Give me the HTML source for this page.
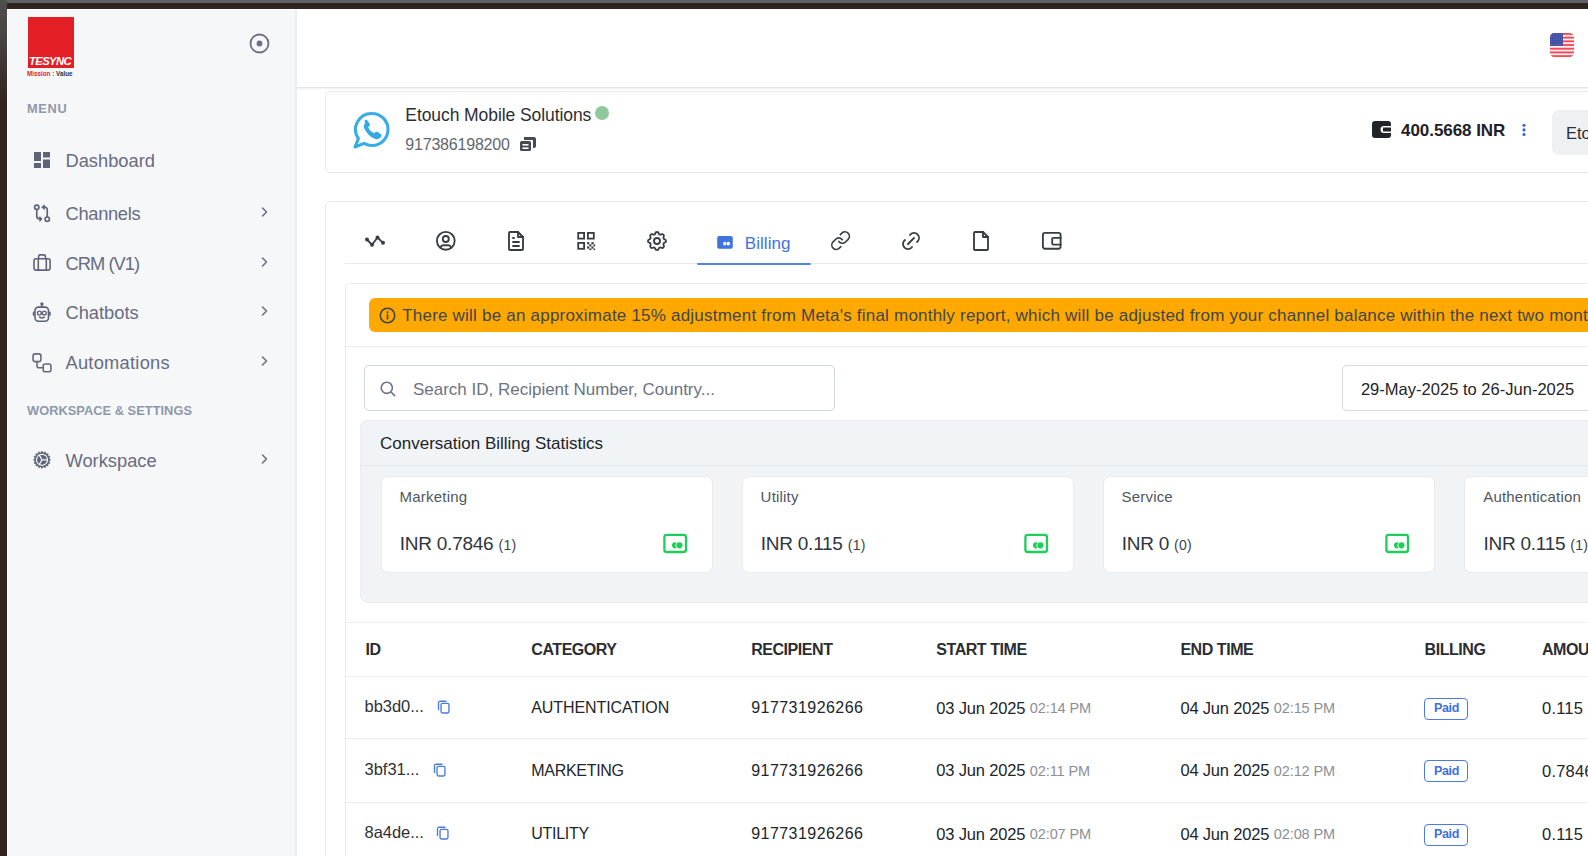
<!DOCTYPE html>
<html><head><meta charset="utf-8">
<style>
*{margin:0;padding:0;box-sizing:border-box}
html,body{width:1588px;height:856px;overflow:hidden;background:#fff;font-family:"Liberation Sans",sans-serif}
.t{position:absolute;white-space:nowrap}
.r{position:absolute}
</style></head><body>
<div class="r" style="left:0px;top:0px;width:1588px;height:856px;background:#fff"></div>
<div class="r" style="left:7px;top:9px;width:290px;height:847px;background:#fff"></div>
<div class="r" style="left:8px;top:10px;width:287px;height:846px;background:#f6f7f9"></div>
<div class="r" style="left:295px;top:9px;width:2px;height:847px;background:#eceef1"></div>
<div class="r" style="left:297px;top:9px;width:1291px;height:78px;background:#fff"></div>
<div class="r" style="left:297px;top:86.5px;width:1291px;height:1.2px;background:#e4e6ea"></div>
<div class="r" style="left:297px;top:87.7px;width:1291px;height:2px;background:linear-gradient(#eef0f2,#fff)"></div>
<div class="r" style="left:28px;top:17px;width:46px;height:51px;background:#e31e24"></div>
<div class="t" style="left:29.4px;top:57.33px;font-size:10px;line-height:10px;color:#fff;font-weight:bold;letter-spacing:-0.55px;font-style:italic;transform:scaleX(1.13);transform-origin:left">TESYNC</div>
<div class="t" style="left:27px;top:70.77px;font-size:6.3px;line-height:6.3px;color:#333;font-weight:bold;letter-spacing:0px;transform:scaleX(1.0);transform-origin:left"><span style="color:#e31e24">Mission :</span> Value</div>
<svg class="r" style="left:249px;top:33px;" width="21" height="21" viewBox="0 0 21 21"><circle cx="10.5" cy="10.5" r="9" fill="none" stroke="#6b6f85" stroke-width="1.8"/><circle cx="10.5" cy="10.5" r="2.9" fill="#6b6f85"/></svg>
<div class="t" style="left:27px;top:102.66px;font-size:12.8px;line-height:12.8px;color:#8f98aa;font-weight:bold;letter-spacing:0.7px;">MENU</div>
<div class="t" style="left:27px;top:404.86px;font-size:12.8px;line-height:12.8px;color:#8f98aa;font-weight:bold;letter-spacing:0.05px;">WORKSPACE &amp; SETTINGS</div>
<div class="t" style="left:65.5px;top:151.91px;font-size:18.3px;line-height:18.3px;color:#676c80;font-weight:normal;letter-spacing:0px;">Dashboard</div>
<div class="t" style="left:65.5px;top:204.91px;font-size:18.3px;line-height:18.3px;color:#676c80;font-weight:normal;letter-spacing:-0.3px;">Channels</div>
<svg class="r" style="left:259px;top:204.8px;" width="12" height="14" viewBox="0 0 12 14"><path d="M3.5 3l4 4-4 4" fill="none" stroke="#6b7080" stroke-width="1.6" stroke-linecap="round" stroke-linejoin="round"/></svg>
<div class="t" style="left:65.5px;top:254.61px;font-size:18.3px;line-height:18.3px;color:#676c80;font-weight:normal;letter-spacing:-0.95px;">CRM (V1)</div>
<svg class="r" style="left:259px;top:254.5px;" width="12" height="14" viewBox="0 0 12 14"><path d="M3.5 3l4 4-4 4" fill="none" stroke="#6b7080" stroke-width="1.6" stroke-linecap="round" stroke-linejoin="round"/></svg>
<div class="t" style="left:65.5px;top:304.31px;font-size:18.3px;line-height:18.3px;color:#676c80;font-weight:normal;letter-spacing:0px;">Chatbots</div>
<svg class="r" style="left:259px;top:304.2px;" width="12" height="14" viewBox="0 0 12 14"><path d="M3.5 3l4 4-4 4" fill="none" stroke="#6b7080" stroke-width="1.6" stroke-linecap="round" stroke-linejoin="round"/></svg>
<div class="t" style="left:65.5px;top:354.21px;font-size:18.3px;line-height:18.3px;color:#676c80;font-weight:normal;letter-spacing:0.25px;">Automations</div>
<svg class="r" style="left:259px;top:354.1px;" width="12" height="14" viewBox="0 0 12 14"><path d="M3.5 3l4 4-4 4" fill="none" stroke="#6b7080" stroke-width="1.6" stroke-linecap="round" stroke-linejoin="round"/></svg>
<div class="t" style="left:65.5px;top:451.91px;font-size:18.3px;line-height:18.3px;color:#676c80;font-weight:normal;letter-spacing:0px;">Workspace</div>
<svg class="r" style="left:259px;top:451.8px;" width="12" height="14" viewBox="0 0 12 14"><path d="M3.5 3l4 4-4 4" fill="none" stroke="#6b7080" stroke-width="1.6" stroke-linecap="round" stroke-linejoin="round"/></svg>
<svg class="r" style="left:34px;top:152px;" width="16" height="16" viewBox="0 0 16 16"><g fill="#5f6377"><rect x="0" y="0" width="7" height="9"/><rect x="9" y="0" width="7" height="5.5"/><rect x="0" y="11" width="7" height="5"/><rect x="9" y="7.5" width="7" height="8.5"/></g></svg>
<svg class="r" style="left:25px;top:195px;" width="35" height="35" viewBox="0 0 35 35"><g fill="none" stroke="#5f6377" stroke-width="1.7" stroke-linecap="round" stroke-linejoin="round"><circle cx="11.75" cy="12.35" r="2.15"/><circle cx="22.25" cy="24.15" r="2.15"/><path d="M11.75 14.5V21.2a2.5 2.5 0 0 0 2.5 2.5H15.5"/><path d="M22.25 22V14.7a2.5 2.5 0 0 0-2.5-2.5H18.5"/></g><g fill="#5f6377" stroke="#5f6377" stroke-width="0.8" stroke-linejoin="round"><path d="M14.7 21.6L17.2 24L14.7 26.4z"/><path d="M19.3 9.9L16.7 12.2L19.3 14.5z"/></g></svg>
<svg class="r" style="left:28px;top:248px;" width="28" height="28" viewBox="0 0 28 28"><g fill="none" stroke="#5f6377" stroke-width="1.6" stroke-linecap="round" stroke-linejoin="round"><rect x="6" y="10.8" width="16.1" height="11.3" rx="2"/><path d="M10.6 10.8V8.4a1.5 1.5 0 0 1 1.5-1.5h3.8a1.5 1.5 0 0 1 1.5 1.5V10.8"/><path d="M10.3 10.8v11.3M18.3 10.8v11.3"/></g></svg>
<svg class="r" style="left:28px;top:298px;" width="28" height="28" viewBox="0 0 28 28"><g fill="none" stroke="#5f6377" stroke-width="1.6" stroke-linecap="round" stroke-linejoin="round"><rect x="7" y="9.1" width="13.5" height="14.1" rx="3.5"/><path d="M13.9 6.5v2.6"/><path d="M5.6 14.3v3M21.9 14.3v3"/><circle cx="11.4" cy="15" r="1.9" stroke-width="1.4"/><circle cx="16.3" cy="15" r="1.9" stroke-width="1.4"/><path d="M11.6 19.1q2.3 1.8 4.6 0"/></g><circle cx="13.9" cy="5.9" r="1.7" fill="#5f6377"/></svg>
<svg class="r" style="left:28px;top:348px;" width="28" height="28" viewBox="0 0 28 28"><g fill="none" stroke="#666a7c" stroke-width="1.6" stroke-linecap="round" stroke-linejoin="round"><rect x="5.1" y="5.9" width="7.8" height="7.7" rx="2"/><rect x="15.2" y="16" width="7.7" height="7.7" rx="2"/><path d="M9 13.6V17.8a2 2 0 0 0 2 2H15.2"/></g></svg>
<svg class="r" style="left:28px;top:445px;" width="28" height="28" viewBox="0 0 28 28"><polygon points="14.00,6.10 15.37,7.93 17.33,6.76 17.89,8.98 20.15,8.65 19.82,10.91 22.04,11.47 20.87,13.43 22.70,14.80 20.87,16.17 22.04,18.13 19.82,18.69 20.15,20.95 17.89,20.62 17.33,22.84 15.37,21.67 14.00,23.50 12.63,21.67 10.67,22.84 10.11,20.62 7.85,20.95 8.18,18.69 5.96,18.13 7.13,16.17 5.30,14.80 7.13,13.43 5.96,11.47 8.18,10.91 7.85,8.65 10.11,8.98 10.67,6.76 12.63,7.93" fill="#5f6377" stroke="#5f6377" stroke-width="0.6" stroke-linejoin="round"/><circle cx="14" cy="14.8" r="6.1" fill="#f6f7f9"/><circle cx="14" cy="14.8" r="4.9" fill="#5f6377"/><path d="M14 14.8L20.00 14.80M14 14.8L11.00 20.00M14 14.8L11.00 9.60" stroke="#f6f7f9" stroke-width="1.3"/></svg>
<svg class="r" style="left:1550px;top:33px;" width="24" height="24" viewBox="0 0 24 24"><defs><clipPath id="fc"><rect x="0" y="0" width="24" height="24" rx="4.5"/></clipPath></defs><g clip-path="url(#fc)"><rect width="24" height="24" fill="#f4f4f4"/><rect x="0" y="0.00" width="24" height="1.9" fill="#fd4757"/><rect x="0" y="3.69" width="24" height="1.9" fill="#fd4757"/><rect x="0" y="7.38" width="24" height="1.9" fill="#fd4757"/><rect x="0" y="11.07" width="24" height="1.9" fill="#fd4757"/><rect x="0" y="14.76" width="24" height="1.9" fill="#fd4757"/><rect x="0" y="18.45" width="24" height="1.9" fill="#fd4757"/><rect x="0" y="22.14" width="24" height="1.9" fill="#fd4757"/><rect x="0" y="0" width="13" height="12.9" fill="#4450a3"/><circle cx="1.50" cy="1.50" r="0.45" fill="#8d96cf"/><circle cx="4.00" cy="1.50" r="0.45" fill="#8d96cf"/><circle cx="6.50" cy="1.50" r="0.45" fill="#8d96cf"/><circle cx="9.00" cy="1.50" r="0.45" fill="#8d96cf"/><circle cx="11.50" cy="1.50" r="0.45" fill="#8d96cf"/><circle cx="1.50" cy="3.95" r="0.45" fill="#8d96cf"/><circle cx="4.00" cy="3.95" r="0.45" fill="#8d96cf"/><circle cx="6.50" cy="3.95" r="0.45" fill="#8d96cf"/><circle cx="9.00" cy="3.95" r="0.45" fill="#8d96cf"/><circle cx="11.50" cy="3.95" r="0.45" fill="#8d96cf"/><circle cx="1.50" cy="6.40" r="0.45" fill="#8d96cf"/><circle cx="4.00" cy="6.40" r="0.45" fill="#8d96cf"/><circle cx="6.50" cy="6.40" r="0.45" fill="#8d96cf"/><circle cx="9.00" cy="6.40" r="0.45" fill="#8d96cf"/><circle cx="11.50" cy="6.40" r="0.45" fill="#8d96cf"/><circle cx="1.50" cy="8.85" r="0.45" fill="#8d96cf"/><circle cx="4.00" cy="8.85" r="0.45" fill="#8d96cf"/><circle cx="6.50" cy="8.85" r="0.45" fill="#8d96cf"/><circle cx="9.00" cy="8.85" r="0.45" fill="#8d96cf"/><circle cx="11.50" cy="8.85" r="0.45" fill="#8d96cf"/><circle cx="1.50" cy="11.30" r="0.45" fill="#8d96cf"/><circle cx="4.00" cy="11.30" r="0.45" fill="#8d96cf"/><circle cx="6.50" cy="11.30" r="0.45" fill="#8d96cf"/><circle cx="9.00" cy="11.30" r="0.45" fill="#8d96cf"/><circle cx="11.50" cy="11.30" r="0.45" fill="#8d96cf"/></g></svg>
<div class="r" style="left:325px;top:91.3px;width:1300px;height:81.4px;border:1px solid #e7e9ec;border-radius:5px;background:#fff"></div>
<svg class="r" style="left:352px;top:110px;" width="40" height="40" viewBox="0 0 40 40"><path d="M20 3.5a16 16 0 0 1 0 32c-2.9 0-5.6-.8-8-2.1L3 37l3.4-8.4A16 16 0 0 1 20 3.5z" fill="none" stroke="#38ace6" stroke-width="3.1" stroke-linejoin="round"/><path transform="translate(20.6 19.4) scale(1.32) translate(-20.25 -19.4)" d="M14.2 12.6c.6-.6 1.6-.6 2.1.1l1.6 2.3c.4.6.3 1.4-.2 1.9l-.8.8c.9 2 2.6 3.8 4.6 4.7l.8-.8c.5-.5 1.3-.6 1.9-.2l2.3 1.6c.7.5.8 1.5.1 2.1l-.9.9c-.9.9-2.3 1.2-3.5.7-3.8-1.6-6.8-4.6-8.4-8.4-.5-1.2-.2-2.6.7-3.5z" fill="#35a9e6"/></svg>
<div class="t" style="left:405.3px;top:106.59px;font-size:17.5px;line-height:17.5px;color:#2b2f33;font-weight:normal;letter-spacing:-0.08px;">Etouch Mobile Solutions</div>
<div class="r" style="left:595px;top:106px;width:14px;height:14px;border-radius:50%;background:#8fc89b"></div>
<div class="t" style="left:405.3px;top:136.86px;font-size:16px;line-height:16px;color:#62676d;font-weight:normal;letter-spacing:-0.2px;">917386198200</div>
<svg class="r" style="left:520px;top:137px;" width="16" height="14" viewBox="0 0 16 14"><g fill="#474b50"><path d="M4 0h10a2 2 0 0 1 2 2v7a2 2 0 0 1-2 2h-1V3H4z"/><rect x="0" y="4" width="11" height="10" rx="1.5"/></g><g fill="#fff"><rect x="2.5" y="7" width="6" height="1.6"/><rect x="2.5" y="10.4" width="6" height="1.6"/></g></svg>
<svg class="r" style="left:1372px;top:121px;" width="19" height="17" viewBox="0 0 19 17"><path d="M3 0h13a3 3 0 0 1 3 3v2h-7a3.5 3.5 0 0 0 0 7h7v2a3 3 0 0 1-3 3H3a3 3 0 0 1-3-3V3a3 3 0 0 1 3-3z" fill="#212529"/><rect x="11" y="6.5" width="8" height="4" fill="#212529"/></svg>
<div class="t" style="left:1401px;top:122.11px;font-size:17px;line-height:17px;color:#1e2226;font-weight:bold;letter-spacing:-0.05px;">400.5668 INR</div>
<svg class="r" style="left:1521px;top:122px;" width="6" height="15" viewBox="0 0 6 15"><g fill="#3a5ee8"><circle cx="3" cy="3.3" r="1.55"/><circle cx="3" cy="7.9" r="1.55"/><circle cx="3" cy="12.5" r="1.55"/></g></svg>
<div class="r" style="left:1552px;top:110px;width:60px;height:45px;background:#eef0f3;border-radius:7px"></div>
<div class="t" style="left:1566px;top:124.63px;font-size:16.5px;line-height:16.5px;color:#2b2f33;font-weight:normal;letter-spacing:0px;">Etouch</div>
<div class="r" style="left:325px;top:200.6px;width:1300px;height:700px;border:1px solid #e7e9ec;border-radius:5px;background:#fff"></div>
<div class="r" style="left:345px;top:263px;width:1300px;height:1px;background:#e9ebee"></div>
<div class="r" style="left:697px;top:262.7px;width:114px;height:2px;background:#5485e6;border-radius:1px"></div>
<svg class="r" style="left:363px;top:231px;" width="24" height="20" viewBox="0 0 24 20"><g fill="none" stroke="#393d43" stroke-width="1.85" stroke-linecap="round" stroke-linejoin="round"><path d="M4 8.5l5 5.3 5.5-7.3 5.5 5.3"/></g><g fill="#393d43"><circle cx="4" cy="8.5" r="2"/><circle cx="9" cy="13.8" r="2"/><circle cx="14.5" cy="6.5" r="2"/><circle cx="20" cy="11.8" r="2"/></g></svg>
<svg class="r" style="left:434px;top:229px;" width="24" height="24" viewBox="0 0 24 24"><g fill="none" stroke="#393d43" stroke-width="1.85" stroke-linecap="round" stroke-linejoin="round" stroke-width="1.9"><circle cx="11.8" cy="11.8" r="8.9"/><circle cx="11.8" cy="10" r="3"/><path d="M6.4 18.8a4 4 0 0 1 3.6-2.6h3.6a4 4 0 0 1 3.6 2.6"/></g></svg>
<svg class="r" style="left:506px;top:229px;" width="20" height="24" viewBox="0 0 20 24"><g fill="none" stroke="#393d43" stroke-width="1.85" stroke-linecap="round" stroke-linejoin="round"><path d="M4 3h8l5 5v12a1 1 0 0 1-1 1H4a1 1 0 0 1-1-1V4a1 1 0 0 1 1-1z"/><path d="M12 3v5h5"/><path d="M7 9h1M7 13h6M7 17h6"/></g></svg>
<svg class="r" style="left:575px;top:230px;" width="23" height="23" viewBox="0 0 23 23"><g fill="none" stroke="#393d43" stroke-width="1.8"><rect x="3.2" y="2.9" width="5.9" height="5.7"/><rect x="12.9" y="2.9" width="5.9" height="5.7"/><rect x="3.2" y="12.9" width="5.9" height="5.9"/></g><g fill="#393d43"><rect x="12.1" y="12.1" width="2.2" height="2.2"/><rect x="16.4" y="12.1" width="2.2" height="2.2"/><rect x="14.3" y="14.3" width="2.1" height="2.1"/><rect x="18.5" y="14.3" width="1.6" height="2.1"/><rect x="12.1" y="16.4" width="2.2" height="2.2"/><rect x="16.4" y="16.4" width="2.1" height="2.2"/><rect x="14.3" y="18.5" width="2.1" height="1.6"/><rect x="18.5" y="18.5" width="1.6" height="1.6"/></g></svg>
<svg class="r" style="left:645px;top:229px;" width="24" height="24" viewBox="0 0 24 24"><g fill="none" stroke="#393d43" stroke-width="1.85" stroke-linecap="round" stroke-linejoin="round"><path d="M10.3 4.3c.4-1.8 3-1.8 3.4 0a1.7 1.7 0 0 0 2.6 1.1c1.5-.9 3.3.8 2.4 2.4a1.7 1.7 0 0 0 1 2.5c1.8.4 1.8 3 0 3.4a1.7 1.7 0 0 0-1 2.6c.9 1.5-.8 3.3-2.4 2.4a1.7 1.7 0 0 0-2.6 1c-.4 1.8-3 1.8-3.4 0a1.7 1.7 0 0 0-2.5-1c-1.6.9-3.3-.8-2.4-2.4a1.7 1.7 0 0 0-1.1-2.6c-1.8-.4-1.8-3 0-3.4a1.7 1.7 0 0 0 1.1-2.5c-.9-1.6.8-3.3 2.4-2.4 1 .6 2.3.1 2.5-1.1z"/><circle cx="12" cy="12" r="3"/></g></svg>
<svg class="r" style="left:717px;top:236px;" width="16" height="13" viewBox="0 0 16 13"><rect x="0.2" y="0" width="15.6" height="12.7" rx="2" fill="#3e73e0"/><circle cx="8" cy="7.6" r="1.9" fill="#fff"/><circle cx="11.2" cy="7.6" r="2.5" fill="#3e73e0"/><circle cx="11.2" cy="7.6" r="1.9" fill="#fff"/></svg>
<div class="t" style="left:744.8px;top:234.91px;font-size:17px;line-height:17px;color:#3e73e0;font-weight:normal;letter-spacing:0.05px;">Billing</div>
<svg class="r" style="left:829.9px;top:230.4px;" width="21.2" height="21.2" viewBox="0 0 24 24"><g fill="none" stroke="#393d43" stroke-width="1.85" stroke-linecap="round" stroke-linejoin="round" stroke-width="2.1"><path d="M10 13a5 5 0 0 0 7.54.54l3-3a5 5 0 0 0-7.07-7.07l-1.72 1.71"/><path d="M14 11a5 5 0 0 0-7.54-.54l-3 3a5 5 0 0 0 7.07 7.07l1.71-1.71"/></g></svg>
<svg class="r" style="left:899px;top:228.9px;" width="24" height="24" viewBox="0 0 24 24"><g fill="none" stroke="#393d43" stroke-width="1.85" stroke-linecap="round" stroke-linejoin="round" stroke-width="1.9"><path d="M9 15l6-6"/><path d="M11 6l.463-.536a5 5 0 0 1 7.071 7.072l-.534.464"/><path d="M13 18l-.397.534a5.068 5.068 0 0 1-7.127 0a4.972 4.972 0 0 1 0-7.071l.524-.463"/></g></svg>
<svg class="r" style="left:970px;top:229px;" width="22" height="24" viewBox="0 0 22 24"><g fill="none" stroke="#393d43" stroke-width="1.85" stroke-linecap="round" stroke-linejoin="round"><path d="M5 3h8l5 5v12a1 1 0 0 1-1 1H5a1 1 0 0 1-1-1V4a1 1 0 0 1 1-1z"/><path d="M13 3v5h5"/></g></svg>
<svg class="r" style="left:1036px;top:226px;" width="30" height="30" viewBox="0 0 30 30"><g fill="none" stroke="#393d43" stroke-width="1.85" stroke-linecap="round" stroke-linejoin="round" stroke-width="1.7"><rect x="6.9" y="6.9" width="17.7" height="15.8" rx="2.2"/><path d="M24.6 11.8H17.2a1 1 0 0 0-1 1V17.6a1 1 0 0 0 1 1H24.6"/></g></svg>
<div class="r" style="left:345px;top:283px;width:1300px;height:700px;border:1px solid #e9ebee;border-radius:5px;background:#fff"></div>
<div class="r" style="left:369px;top:298px;width:1300px;height:34px;background:#ffa800;border-radius:6px"></div>
<svg class="r" style="left:379px;top:307px;" width="17" height="17" viewBox="0 0 17 17"><circle cx="8.5" cy="8.5" r="7.2" fill="none" stroke="#3f4650" stroke-width="1.6"/><circle cx="8.5" cy="5.2" r="1" fill="#3f4650"/><rect x="7.7" y="7.2" width="1.6" height="5.3" fill="#3f4650"/></svg>
<div class="t" style="left:402.2px;top:307.21px;font-size:17px;line-height:17px;color:#3f4650;font-weight:normal;letter-spacing:0.215px;">There will be an approximate 15% adjustment from Meta's final monthly report, which will be adjusted from your channel balance within the next two months.</div>
<div class="r" style="left:346px;top:346px;width:1300px;height:1px;background:#eceef1"></div>
<div class="r" style="left:364px;top:365px;width:471px;height:46px;border:1px solid #d2d7df;border-radius:5px;background:#fff"></div>
<svg class="r" style="left:379px;top:380px;" width="18" height="18" viewBox="0 0 18 18"><circle cx="7.8" cy="7.8" r="5.6" fill="none" stroke="#6c7384" stroke-width="1.6"/><path d="M12 12l3.6 3.6" stroke="#6c7384" stroke-width="1.6" stroke-linecap="round"/></svg>
<div class="t" style="left:412.9px;top:380.51px;font-size:17px;line-height:17px;color:#6c7282;font-weight:normal;letter-spacing:0px;">Search ID, Recipient Number, Country...</div>
<div class="r" style="left:1342px;top:365px;width:400px;height:46px;border:1px solid #d8dce2;border-radius:5px;background:#fff"></div>
<div class="t" style="left:1360.9px;top:380.93px;font-size:16.5px;line-height:16.5px;color:#212529;font-weight:normal;letter-spacing:0.02px;">29-May-2025 to 26-Jun-2025</div>
<div class="r" style="left:359.5px;top:420px;width:1300px;height:183px;background:#f1f4f7;border:1px solid #e9edf1;border-radius:7px"></div>
<div class="r" style="left:360px;top:465px;width:1300px;height:1px;background:#e3e7ec"></div>
<div class="t" style="left:380px;top:435.41px;font-size:17px;line-height:17px;color:#212529;font-weight:normal;letter-spacing:0px;">Conversation Billing Statistics</div>
<div class="r" style="left:380.6px;top:475.5px;width:332px;height:97.5px;background:#fff;border:1px solid #e8ebee;border-radius:7px"></div>
<div class="t" style="left:399.6px;top:489.10px;font-size:15px;line-height:15px;color:#4f565e;font-weight:normal;letter-spacing:0.2px;">Marketing</div>
<div class="t" style="left:399.8px;top:534.22px;font-size:19px;line-height:19px;color:#30363d;letter-spacing:-0.25px">INR 0.7846 <span style="font-size:14px;color:#3d434a;letter-spacing:0.3px">(1)</span></div>
<svg class="r" style="left:662.8px;top:532.5px;" width="25" height="21" viewBox="0 0 25 21"><rect x="1.4" y="1.9" width="21.6" height="17.1" rx="2.3" fill="none" stroke="#1fcd5b" stroke-width="2.3"/><circle cx="12.1" cy="12.35" r="3.1" fill="#1fcd5b"/><circle cx="16.45" cy="12.35" r="3.9" fill="#fff"/><circle cx="16.45" cy="12.35" r="3.1" fill="#1fcd5b"/></svg>
<div class="r" style="left:741.6px;top:475.5px;width:332px;height:97.5px;background:#fff;border:1px solid #e8ebee;border-radius:7px"></div>
<div class="t" style="left:760.6px;top:489.10px;font-size:15px;line-height:15px;color:#4f565e;font-weight:normal;letter-spacing:0.2px;">Utility</div>
<div class="t" style="left:760.8000000000001px;top:534.22px;font-size:19px;line-height:19px;color:#30363d;letter-spacing:-0.25px">INR 0.115 <span style="font-size:14px;color:#3d434a;letter-spacing:0.3px">(1)</span></div>
<svg class="r" style="left:1023.8px;top:532.5px;" width="25" height="21" viewBox="0 0 25 21"><rect x="1.4" y="1.9" width="21.6" height="17.1" rx="2.3" fill="none" stroke="#1fcd5b" stroke-width="2.3"/><circle cx="12.1" cy="12.35" r="3.1" fill="#1fcd5b"/><circle cx="16.45" cy="12.35" r="3.9" fill="#fff"/><circle cx="16.45" cy="12.35" r="3.1" fill="#1fcd5b"/></svg>
<div class="r" style="left:1102.5px;top:475.5px;width:332px;height:97.5px;background:#fff;border:1px solid #e8ebee;border-radius:7px"></div>
<div class="t" style="left:1121.5px;top:489.10px;font-size:15px;line-height:15px;color:#4f565e;font-weight:normal;letter-spacing:0.2px;">Service</div>
<div class="t" style="left:1121.7px;top:534.22px;font-size:19px;line-height:19px;color:#30363d;letter-spacing:-0.25px">INR 0 <span style="font-size:14px;color:#3d434a;letter-spacing:0.3px">(0)</span></div>
<svg class="r" style="left:1384.7px;top:532.5px;" width="25" height="21" viewBox="0 0 25 21"><rect x="1.4" y="1.9" width="21.6" height="17.1" rx="2.3" fill="none" stroke="#1fcd5b" stroke-width="2.3"/><circle cx="12.1" cy="12.35" r="3.1" fill="#1fcd5b"/><circle cx="16.45" cy="12.35" r="3.9" fill="#fff"/><circle cx="16.45" cy="12.35" r="3.1" fill="#1fcd5b"/></svg>
<div class="r" style="left:1464.2px;top:475.5px;width:332px;height:97.5px;background:#fff;border:1px solid #e8ebee;border-radius:7px"></div>
<div class="t" style="left:1483.2px;top:489.10px;font-size:15px;line-height:15px;color:#4f565e;font-weight:normal;letter-spacing:0.2px;">Authentication</div>
<div class="t" style="left:1483.4px;top:534.22px;font-size:19px;line-height:19px;color:#30363d;letter-spacing:-0.25px">INR 0.115 <span style="font-size:14px;color:#3d434a;letter-spacing:0.3px">(1)</span></div>
<svg class="r" style="left:1746.4px;top:532.5px;" width="25" height="21" viewBox="0 0 25 21"><rect x="1.4" y="1.9" width="21.6" height="17.1" rx="2.3" fill="none" stroke="#1fcd5b" stroke-width="2.3"/><circle cx="12.1" cy="12.35" r="3.1" fill="#1fcd5b"/><circle cx="16.45" cy="12.35" r="3.9" fill="#fff"/><circle cx="16.45" cy="12.35" r="3.1" fill="#1fcd5b"/></svg>
<div class="r" style="left:346px;top:621.5px;width:1300px;height:1px;background:#eceef0"></div>
<div class="r" style="left:346px;top:675.5px;width:1300px;height:1px;background:#eceef0"></div>
<div class="r" style="left:346px;top:738.2px;width:1300px;height:1px;background:#eceef0"></div>
<div class="r" style="left:346px;top:801.5px;width:1300px;height:1px;background:#eceef0"></div>
<div class="t" style="left:365.5px;top:641.76px;font-size:16px;line-height:16px;color:#2a2d32;font-weight:bold;letter-spacing:-0.45px;">ID</div>
<div class="t" style="left:531.3px;top:641.76px;font-size:16px;line-height:16px;color:#2a2d32;font-weight:bold;letter-spacing:-0.45px;">CATEGORY</div>
<div class="t" style="left:751.2px;top:641.76px;font-size:16px;line-height:16px;color:#2a2d32;font-weight:bold;letter-spacing:-0.45px;">RECIPIENT</div>
<div class="t" style="left:936.3px;top:641.76px;font-size:16px;line-height:16px;color:#2a2d32;font-weight:bold;letter-spacing:-0.45px;">START TIME</div>
<div class="t" style="left:1180.4px;top:641.76px;font-size:16px;line-height:16px;color:#2a2d32;font-weight:bold;letter-spacing:-0.45px;">END TIME</div>
<div class="t" style="left:1424.6px;top:641.76px;font-size:16px;line-height:16px;color:#2a2d32;font-weight:bold;letter-spacing:-0.45px;">BILLING</div>
<div class="t" style="left:1542px;top:641.76px;font-size:16px;line-height:16px;color:#2a2d32;font-weight:bold;letter-spacing:-0.45px;">AMOUNT</div>
<div class="t" style="left:364.6px;top:698.03px;font-size:16.5px;line-height:16.5px;color:#2d3136;font-weight:normal;letter-spacing:-0.05px;">bb3d0...</div>
<svg class="r" style="left:437px;top:700.0px;" width="14" height="15" viewBox="0 0 14 15"><g fill="none" stroke="#4a7be0" stroke-width="1.35" stroke-linecap="round"><rect x="4.05" y="3.35" width="7.9" height="9.6" rx="1.4"/><path d="M1.5 9.4V2.7a1.5 1.5 0 0 1 1.5-1.5H9"/></g></svg>
<div class="t" style="left:531.3px;top:700.16px;font-size:16px;line-height:16px;color:#212529;font-weight:normal;letter-spacing:-0.1px;">AUTHENTICATION</div>
<div class="t" style="left:751.2px;top:700.16px;font-size:16px;line-height:16px;color:#212529;font-weight:normal;letter-spacing:0.45px;">917731926266</div>
<div class="t" style="left:936.3px;top:699.73px;font-size:16.5px;line-height:16.5px;color:#212529;font-weight:normal;letter-spacing:-0.18px;">03 Jun 2025</div>
<div class="t" style="left:1029.8px;top:701.43px;font-size:14.5px;line-height:14.5px;color:#8a8f96;font-weight:normal;letter-spacing:-0.1px;">02:14 PM</div>
<div class="t" style="left:1180.4px;top:699.73px;font-size:16.5px;line-height:16.5px;color:#212529;font-weight:normal;letter-spacing:-0.18px;">04 Jun 2025</div>
<div class="t" style="left:1273.8px;top:701.43px;font-size:14.5px;line-height:14.5px;color:#8a8f96;font-weight:normal;letter-spacing:-0.1px;">02:15 PM</div>
<div class="r" style="left:1424px;top:697.7px;width:44px;height:22px;border:1.5px solid #4a7be0;border-radius:4px;background:#fff"></div>
<div class="t" style="left:1434px;top:702.32px;font-size:12.5px;line-height:12.5px;color:#3d6fe0;font-weight:bold;letter-spacing:-0.35px;">Paid</div>
<div class="t" style="left:1542px;top:700.13px;font-size:16.5px;line-height:16.5px;color:#212529;font-weight:normal;letter-spacing:0.2px;">0.115</div>
<div class="t" style="left:364.6px;top:760.73px;font-size:16.5px;line-height:16.5px;color:#2d3136;font-weight:normal;letter-spacing:-0.05px;">3bf31...</div>
<svg class="r" style="left:432.5px;top:762.7px;" width="14" height="15" viewBox="0 0 14 15"><g fill="none" stroke="#4a7be0" stroke-width="1.35" stroke-linecap="round"><rect x="4.05" y="3.35" width="7.9" height="9.6" rx="1.4"/><path d="M1.5 9.4V2.7a1.5 1.5 0 0 1 1.5-1.5H9"/></g></svg>
<div class="t" style="left:531.3px;top:762.86px;font-size:16px;line-height:16px;color:#212529;font-weight:normal;letter-spacing:-0.3px;">MARKETING</div>
<div class="t" style="left:751.2px;top:762.86px;font-size:16px;line-height:16px;color:#212529;font-weight:normal;letter-spacing:0.45px;">917731926266</div>
<div class="t" style="left:936.3px;top:762.43px;font-size:16.5px;line-height:16.5px;color:#212529;font-weight:normal;letter-spacing:-0.18px;">03 Jun 2025</div>
<div class="t" style="left:1029.8px;top:764.13px;font-size:14.5px;line-height:14.5px;color:#8a8f96;font-weight:normal;letter-spacing:-0.1px;">02:11 PM</div>
<div class="t" style="left:1180.4px;top:762.43px;font-size:16.5px;line-height:16.5px;color:#212529;font-weight:normal;letter-spacing:-0.18px;">04 Jun 2025</div>
<div class="t" style="left:1273.8px;top:764.13px;font-size:14.5px;line-height:14.5px;color:#8a8f96;font-weight:normal;letter-spacing:-0.1px;">02:12 PM</div>
<div class="r" style="left:1424px;top:760.4000000000001px;width:44px;height:22px;border:1.5px solid #4a7be0;border-radius:4px;background:#fff"></div>
<div class="t" style="left:1434px;top:765.02px;font-size:12.5px;line-height:12.5px;color:#3d6fe0;font-weight:bold;letter-spacing:-0.35px;">Paid</div>
<div class="t" style="left:1542px;top:762.83px;font-size:16.5px;line-height:16.5px;color:#212529;font-weight:normal;letter-spacing:0.2px;">0.7846</div>
<div class="t" style="left:364.6px;top:824.03px;font-size:16.5px;line-height:16.5px;color:#2d3136;font-weight:normal;letter-spacing:-0.05px;">8a4de...</div>
<svg class="r" style="left:436px;top:826.0px;" width="14" height="15" viewBox="0 0 14 15"><g fill="none" stroke="#4a7be0" stroke-width="1.35" stroke-linecap="round"><rect x="4.05" y="3.35" width="7.9" height="9.6" rx="1.4"/><path d="M1.5 9.4V2.7a1.5 1.5 0 0 1 1.5-1.5H9"/></g></svg>
<div class="t" style="left:531.3px;top:826.16px;font-size:16px;line-height:16px;color:#212529;font-weight:normal;letter-spacing:-0.3px;">UTILITY</div>
<div class="t" style="left:751.2px;top:826.16px;font-size:16px;line-height:16px;color:#212529;font-weight:normal;letter-spacing:0.45px;">917731926266</div>
<div class="t" style="left:936.3px;top:825.73px;font-size:16.5px;line-height:16.5px;color:#212529;font-weight:normal;letter-spacing:-0.18px;">03 Jun 2025</div>
<div class="t" style="left:1029.8px;top:827.43px;font-size:14.5px;line-height:14.5px;color:#8a8f96;font-weight:normal;letter-spacing:-0.1px;">02:07 PM</div>
<div class="t" style="left:1180.4px;top:825.73px;font-size:16.5px;line-height:16.5px;color:#212529;font-weight:normal;letter-spacing:-0.18px;">04 Jun 2025</div>
<div class="t" style="left:1273.8px;top:827.43px;font-size:14.5px;line-height:14.5px;color:#8a8f96;font-weight:normal;letter-spacing:-0.1px;">02:08 PM</div>
<div class="r" style="left:1424px;top:823.7px;width:44px;height:22px;border:1.5px solid #4a7be0;border-radius:4px;background:#fff"></div>
<div class="t" style="left:1434px;top:828.32px;font-size:12.5px;line-height:12.5px;color:#3d6fe0;font-weight:bold;letter-spacing:-0.35px;">Paid</div>
<div class="t" style="left:1542px;top:826.13px;font-size:16.5px;line-height:16.5px;color:#212529;font-weight:normal;letter-spacing:0.2px;">0.115</div>
<div class="r" style="left:0px;top:0px;width:1588px;height:3px;background:rgb(95,98,100)"></div>
<div class="r" style="left:0px;top:3px;width:1588px;height:6px;background:rgb(48,36,32)"></div>
<div class="r" style="left:0px;top:0px;width:7px;height:856px;background:linear-gradient(rgb(80,80,80) 0px, rgb(70,66,64) 40px, rgb(52,36,32) 100px, rgb(52,34,30) 856px)"></div>
</body></html>
